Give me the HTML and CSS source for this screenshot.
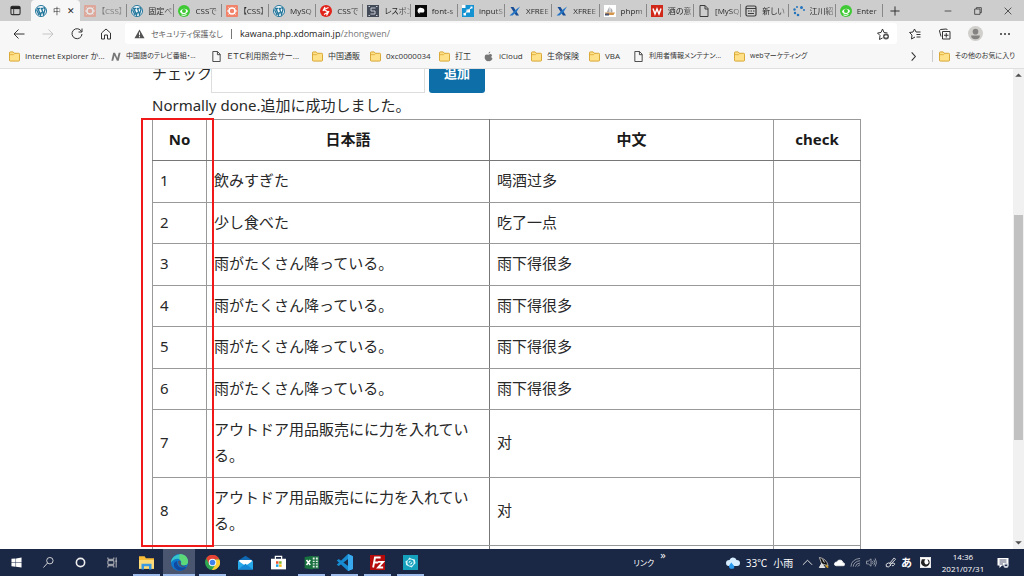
FILE: index.html
```html
<!DOCTYPE html>
<html lang="ja">
<head>
<meta charset="utf-8">
<title>中文</title>
<link rel="stylesheet" href="styles.css">
</head>
<body>
<svg class="defs" aria-hidden="true">
  <symbol id="wp" viewBox="0 0 24 24"><circle cx="12" cy="12" r="11" fill="#fff" stroke="#21759b" stroke-width="2"/><path d="M4 7h6M6 7l5 13 2-6M11 7h6M13 7l4 12 3-10c0-2-2-3-2-5M3 9l5 11" fill="none" stroke="#21759b" stroke-width="2.6"/></symbol>
  <symbol id="orange" viewBox="0 0 24 24"><rect width="24" height="24" rx="2" fill="#f0836a"/><circle cx="12" cy="12" r="6" fill="none" stroke="#fff" stroke-width="3"/><path d="M2 12h4M18 12h4M5 5l3 3M19 5l-3 3M5 19l3-3M19 19l-3-3" stroke="#fff" stroke-width="2"/></symbol>
  <symbol id="green" viewBox="0 0 24 24"><circle cx="12" cy="12" r="12" fill="#3fca35"/><path d="M4 13c3-7 13-7 16-1-2 7-13 9-16 1z" fill="#fff"/><circle cx="12" cy="12" r="4" fill="#3fca35"/><path d="M7 20q5 2 10-1" stroke="#fff" stroke-width="2" fill="none"/></symbol>
  <symbol id="red" viewBox="0 0 24 24"><circle cx="12" cy="12" r="12" fill="#e2231a"/><path d="M17 5 8 9l8 5-8 5M6 12l4-8M18 12l-5 9" fill="none" stroke="#fff" stroke-width="2.6"/></symbol>
  <symbol id="slate" viewBox="0 0 24 24"><rect width="24" height="24" fill="#434a58"/><path d="M17 6H8v6h8v6H7M3 3h3M18 3h3M3 21h3M18 21h3" fill="none" stroke="#c5cad3" stroke-width="2"/></symbol>
  <symbol id="black" viewBox="0 0 24 24"><rect width="24" height="24" fill="#080808"/><path d="M5 12c0-5 4-8 8-6 5-1 8 6 4 9H9v3l-3-3z" fill="#fff"/></symbol>
  <symbol id="blue" viewBox="0 0 24 24"><rect width="24" height="24" fill="#1492d2"/><path d="M0 0h7v6H0zM9 9h7v6H9zM17 3h4v4h-4zM3 16h5v5H3z" fill="#fff"/><path d="m5 18 7-7 7-6" stroke="#fff" stroke-width="2"/></symbol>
  <symbol id="xfree" viewBox="0 0 24 24"><path d="M3 4h6l11 17h-6z" fill="#174c96"/><path d="m22 3-8 6-4 4-9 8h6l8-7z" fill="#2475c5"/></symbol>
  <symbol id="pma" viewBox="0 0 24 24"><rect width="24" height="24" fill="#fff"/><path d="M11 3v12H5zM13 5q5 4 4 10h-4z" fill="#a9a9ad"/><path d="M1 15h21l-3 5H6z" fill="#d49449"/><path d="M2 17h8v4H2z" fill="#465170"/></symbol>
  <symbol id="weblio" viewBox="0 0 24 24"><rect width="24" height="24" fill="#d02719"/><path d="m4 7 4 11 4-10 4 10 4-11" fill="none" stroke="#fff" stroke-width="3"/></symbol>
  <symbol id="page" viewBox="0 0 24 24"><path d="M4 1h10l6 6v16H4zM14 1v7h6" fill="none" stroke="#3c3c3c" stroke-width="2"/></symbol>
  <symbol id="newtab" viewBox="0 0 24 24"><rect x="2" y="2" width="20" height="20" rx="3" fill="none" stroke="#3c3c3c" stroke-width="2.4"/><path d="M2 7h20M6 12h3M11 12h3M16 12h3M6 17h12" stroke="#3c3c3c" stroke-width="2"/></symbol>
  <symbol id="dots" viewBox="0 0 24 24"><g fill="#2475bd"><circle cx="3" cy="9" r="2.4"/><circle cx="8" cy="4" r="2"/><circle cx="4" cy="16" r="2.4"/><circle cx="10" cy="20" r="2.6"/><circle cx="17" cy="5" r="3"/><circle cx="22" cy="10" r="2"/></g></symbol>
  <symbol id="folder" viewBox="0 0 24 24"><path d="M1 4q0-2 2-2h6l3 3h9q2 0 2 2v13q0 2-2 2H3q-2 0-2-2z" fill="#ffe18a" stroke="#d5a128" stroke-width="2"/><path d="M1 8h9l3-3" stroke="#d5a128" stroke-width="1.5" fill="none"/></symbol>
</svg>

<header>
  <div class="tabbar">
    <button class="tabmenu" aria-label="タブ操作メニュー"><svg viewBox="0 0 24 24"><rect x="2" y="3" width="20" height="18" rx="3" fill="none" stroke="#333" stroke-width="2.4"/><path d="M2 4h20v5H2z" fill="#222"/><path d="M8 9v12" stroke="#333" stroke-width="2"/></svg></button>
    <nav class="tabs">
      <button class="tab active"><svg><use href="#wp"/></svg><span>中</span><i>✕</i></button>
      <button class="tab dim"><svg><use href="#orange"/></svg><span>【CSS】</span></button>
      <button class="tab"><svg><use href="#wp"/></svg><span>固定ペ</span></button>
      <button class="tab"><svg><use href="#green"/></svg><span>CSSで</span></button>
      <button class="tab"><svg><use href="#orange"/></svg><span>【CSS】</span></button>
      <button class="tab"><svg><use href="#wp"/></svg><span>MySQ</span></button>
      <button class="tab"><svg><use href="#red"/></svg><span>CSSで</span></button>
      <button class="tab"><svg><use href="#slate"/></svg><span>レスポン</span></button>
      <button class="tab"><svg><use href="#black"/></svg><span>font-s</span></button>
      <button class="tab"><svg><use href="#blue"/></svg><span>inputS</span></button>
      <button class="tab"><svg><use href="#xfree"/></svg><span>XFREE</span></button>
      <button class="tab"><svg><use href="#xfree"/></svg><span>XFREE</span></button>
      <button class="tab"><svg><use href="#pma"/></svg><span>phpm</span></button>
      <button class="tab"><svg><use href="#weblio"/></svg><span>酒の意</span></button>
      <button class="tab"><svg><use href="#page"/></svg><span>[MySQ</span></button>
      <button class="tab"><svg><use href="#newtab"/></svg><span>新しい</span></button>
      <button class="tab"><svg><use href="#dots"/></svg><span>江川紹</span></button>
      <button class="tab"><svg><use href="#green"/></svg><span>Enter</span></button>
    </nav>
    <div class="winctl">
      <button class="plus" aria-label="新しいタブ"><svg viewBox="0 0 24 24"><path d="M12 1v22M1 12h22"/></svg></button>
      <button aria-label="最小化"><svg viewBox="0 0 24 24"><path d="M2 12h20"/></svg></button>
      <button aria-label="元に戻す"><svg viewBox="0 0 24 24"><path d="M2 6h16v16H2zM7 6V2h15v15h-4"/></svg></button>
      <button aria-label="閉じる"><svg viewBox="0 0 24 24"><path d="m2 2 20 20M22 2 2 22"/></svg></button>
    </div>
  </div>

  <div class="toolbar">
    <button aria-label="戻る"><svg viewBox="0 0 24 24"><path d="M23 12H2M11 3l-9 9 9 9"/></svg></button>
    <button class="off" aria-label="進む"><svg viewBox="0 0 24 24"><path d="M1 12h21M13 3l9 9-9 9"/></svg></button>
    <button aria-label="更新"><svg viewBox="0 0 24 24"><path d="M21 7a10 10 0 1 0 1 5M22 1v7h-7"/></svg></button>
    <button aria-label="ホーム"><svg viewBox="0 0 24 24"><path d="m3 10 9-8 9 8v12h-6v-8H9v8H3z"/></svg></button>
    <div class="address">
      <svg class="warn" viewBox="0 0 24 24"><path d="M12 1 24 22H0z" fill="#555"/><path d="M12 8v7M12 17v3" stroke="#fff" stroke-width="2.4"/></svg>
      <span class="insecure">セキュリティ保護なし</span><span class="bar"></span>
      <span class="url" role="textbox" aria-label="アドレス">kawana.php.xdomain.jp<span>/zhongwen/</span></span>
      <button aria-label="お気に入りに追加"><svg viewBox="0 0 24 24"><path d="M11 20l-6 3 1-8-5-5 7-1 3-7 3 7 7 1"/><circle cx="18" cy="17" r="6" fill="#555" stroke="none"/><path d="M18 14v6M15 17h6" stroke="#fff"/></svg></button>
    </div>
    <button aria-label="お気に入り"><svg viewBox="0 0 24 24"><path d="M12 18l-7 4 1-8-5-5 7-1 3-6 3 6h9M15 13h8M15 18h8"/></svg></button>
    <button aria-label="コレクション"><svg viewBox="0 0 24 24"><path d="M7 7h15v15H7zM4 17l-3-11q0-2 2-3l11-1q2 0 3 2M14.500 10v9M10 14.500h9"/></svg></button>
    <button aria-label="プロフィール"><svg class="avatar" viewBox="0 0 24 24"><circle cx="12" cy="12" r="12" fill="#d1cfcc" stroke="none"/><circle cx="12" cy="9" r="4.500" fill="#858381" stroke="none"/><path d="M5 15h14q0 6-7 6t-7-6z" fill="#858381" stroke="none"/></svg></button>
    <button aria-label="設定など"><svg viewBox="0 0 24 24"><g fill="#333" stroke="none"><circle cx="4" cy="12" r="2"/><circle cx="12" cy="12" r="2"/><circle cx="20" cy="12" r="2"/></g></svg></button>
  </div>

  <nav class="bookmarks">
    <a href="#" class="long"><svg><use href="#folder"/></svg>Internet Explorer か...</a>
    <a href="#" class="long kana"><svg viewBox="0 0 24 24"><path d="m3 21 4-17h4l5 11 3-11h4l-4 17h-4l-5-11-3 11z" fill="#777"/></svg>中国語のテレビ番組・...</a>
    <a href="#" class="long"><svg><use href="#page"/></svg>ＥＴＣ利用照会サー...</a>
    <a href="#" class="mid"><svg><use href="#folder"/></svg>中国通販</a>
    <a href="#" class="wide"><svg><use href="#folder"/></svg>0xc0000034</a>
    <a href="#" class="short"><svg><use href="#folder"/></svg>打工</a>
    <a href="#" class="apple"><svg viewBox="0 0 24 24"><path d="M16 1q0 4-4 5 0-4 4-5zM12 8q5-3 8 1-4 4 1 8-4 7-9 5-5 2-8-5-2-12 8-9z" fill="#777"/></svg>iCloud</a>
    <a href="#" class="mid"><svg><use href="#folder"/></svg>生命保険</a>
    <a href="#" class="short"><svg><use href="#folder"/></svg>VBA</a>
    <a href="#" class="long kana"><svg><use href="#page"/></svg>利用者情報メンテナン...</a>
    <a href="#" class="long kana"><svg><use href="#folder"/></svg>webマーケティング</a>
    <button class="more" aria-label="その他"><svg viewBox="0 0 24 24"><path d="m8 3 8 9-8 9" fill="none" stroke="#333" stroke-width="2.4"/></svg></button>
    <a href="#" class="others kana"><svg><use href="#folder"/></svg>その他のお気に入り</a>
  </nav>
</header>

<div class="viewport">
  <main>
    <div class="content">
      <form class="entry">
        <label for="chk">チェック</label><input id="chk" type="text"><button type="button">追加</button>
      </form>
      <p>Normally done.追加に成功しました。</p>
      <div class="tablewrap">
        <table>
          <colgroup><col class="c-no"><col class="c-ja"><col class="c-zh"><col class="c-check"></colgroup>
          <thead><tr><th>No</th><th>日本語</th><th>中文</th><th>check</th></tr></thead>
          <tbody>
            <tr><td>1</td><td>飲みすぎた</td><td lang="zh">喝酒过多</td><td></td></tr>
            <tr><td>2</td><td>少し食べた</td><td lang="zh">吃了一点</td><td></td></tr>
            <tr><td>3</td><td>雨がたくさん降っている。</td><td lang="zh">雨下得很多</td><td></td></tr>
            <tr><td>4</td><td>雨がたくさん降っている。</td><td lang="zh">雨下得很多</td><td></td></tr>
            <tr><td>5</td><td>雨がたくさん降っている。</td><td lang="zh">雨下得很多</td><td></td></tr>
            <tr><td>6</td><td>雨がたくさん降っている。</td><td lang="zh">雨下得很多</td><td></td></tr>
            <tr><td>7</td><td>アウトドア用品販売にに力を入れている。</td><td lang="zh">对</td><td></td></tr>
            <tr><td>8</td><td>アウトドア用品販売にに力を入れている。</td><td lang="zh">对</td><td></td></tr>
            <tr><td>&nbsp;</td><td></td><td></td><td></td></tr>
          </tbody>
        </table>
        <div class="marker"></div>
      </div>
    </div>
  </main>
  <div class="scrollbar">
    <svg viewBox="0 0 10 10"><path d="m2 7 3-3 3 3z" fill="#505050"/></svg>
    <span class="before"></span><span class="thumb"></span><span class="after"></span>
    <svg viewBox="0 0 10 10"><path d="m2 3 3 3 3-3z" fill="#505050"/></svg>
  </div>
</div>

<footer class="taskbar">
  <div class="system">
    <button aria-label="スタート"><svg viewBox="0 0 24 24"><path d="m1 4 9-1v8H1zM11 3l12-2v10H11zM1 12h9v9l-9-1zM11 12h12v11l-12-2z" fill="#fff"/></svg></button>
    <button aria-label="検索"><svg viewBox="0 0 24 24"><g fill="none" stroke="#ddd" stroke-width="2"><circle cx="15" cy="8" r="7"/><path d="M10 13 1 23"/></g></svg></button>
    <button aria-label="Cortana"><svg viewBox="0 0 24 24"><circle cx="12" cy="12" r="9" fill="none" stroke="#eee" stroke-width="3.500"/></svg></button>
    <button aria-label="タスク ビュー"><svg viewBox="0 0 24 24"><path d="M2 1v4h13V1M2 23v-4h13v4M2 8h13v8H2zM20 1v22M18 9h4" fill="none" stroke="#ccc" stroke-width="2"/></svg></button>
  </div>
  <div class="apps">
    <button class="run" aria-label="エクスプローラー"><svg viewBox="0 0 24 24"><path d="M0 2h9l2 3h13v17H0z" fill="#f8bd38"/><path d="M0 8h24v14H0z" fill="#ffdc79"/><path d="M4 23v-9h16v9h-4v-5H8v5z" fill="#3d9ae0"/></svg></button>
    <button class="run current" aria-label="Edge"><svg class="big" viewBox="0 0 24 24"><circle cx="12" cy="12" r="12" fill="#0c78ce"/><path d="M0 12C1-3 24-3 24 11c0 6-8 6-10 3 3-7-7-11-14-2z" fill="#37c5ca"/><path d="M12 0c9 0 12 6 12 11 0 6-8 6-10 3 2-3 0-5-2-6z" fill="#5cd879"/><path d="M9 10c-2 7 5 11 13 8-6 10-18 4-18-3q0-4 5-5z" fill="#12499e"/><path d="M10 10c5-2 4 3 4 5 3 2 6 2 8 1-4 5-13 2-12-6z" fill="#4a566f"/></svg></button>
    <button class="run" aria-label="Chrome"><svg viewBox="0 0 24 24"><circle cx="12" cy="12" r="12" fill="#2ea650"/><path d="M2 5a12 12 0 0 1 21 2H12l-5 8z" fill="#e34234"/><path d="M23 7a12 12 0 0 1-12 17l6-9V7z" fill="#fccc32"/><circle cx="12" cy="12" r="6" fill="#fff"/><circle cx="12" cy="12" r="4.500" fill="#3d82ed"/></svg></button>
    <button aria-label="メール"><svg viewBox="0 0 24 24"><path d="M0 9 12 1l12 8v13H0z" fill="#1068b3"/><path d="M2 8h20v8H2z" fill="#fff"/><path d="m0 9 12 8L24 9v14H0z" fill="#27a8e8"/><path d="m0 23 12-9 12 9z" fill="#1689d6"/></svg></button>
    <button aria-label="Microsoft Store"><svg viewBox="0 0 24 24"><path d="M7 7V2h10v5" fill="none" stroke="#fff" stroke-width="2"/><path d="M0 6h24v17H0z" fill="#fff"/><path d="M8 10h4v4H8z" fill="#ee5126"/><path d="M13 10h4v4h-4z" fill="#7cb72b"/><path d="M8 15h4v4H8z" fill="#1ca4e6"/><path d="M13 15h4v4h-4z" fill="#f9b915"/></svg></button>
    <button class="run" aria-label="Excel"><svg viewBox="0 0 24 24"><path d="M12 3h11v18H12z" fill="#e7f3eb" stroke="#1e7145" stroke-width="2"/><path d="M13 8h9M13 12h9M13 16h9M18 3v18" stroke="#1e7145" stroke-width="2"/><path d="m1 3 13-2v22L1 21z" fill="#17723f"/><path d="m4 8 6 8M10 8l-6 8" stroke="#fff" stroke-width="2.400"/></svg></button>
    <button class="run" aria-label="Visual Studio Code"><svg class="big" viewBox="0 0 24 24"><path d="m17 0 7 3v18l-7 3L1 9l3-2 13 10V7L4 17l-3-2z" fill="#168bd2"/><path d="m17 0 7 3v18l-7 3z" fill="#38a9ee"/></svg></button>
    <button class="run" aria-label="FileZilla"><svg viewBox="0 0 24 24"><rect width="24" height="24" fill="#b50b0b"/><path d="M5 20 8 4h9M6 12h7M13 11h8l-8 9h8" fill="none" stroke="#fff" stroke-width="3"/></svg></button>
    <button class="run" aria-label="アプリ"><svg viewBox="0 0 24 24"><rect width="24" height="24" fill="#15a0bb"/><path d="m10 4 4 2 5 1 1 6-3 3-3 4-5-2-4-2-1-6 4-2z" fill="#d8f6fa"/><circle cx="12" cy="12" r="4" fill="none" stroke="#15a0bb" stroke-width="2"/><path d="m10 14 4-4" stroke="#15a0bb" stroke-width="2"/></svg></button>
  </div>
  <div class="links">リンク<sup>»</sup></div>
  <div class="weather"><svg viewBox="0 0 24 24"><path d="M5 17q-5 0-5-5t6-5q2-6 8-4 3 1 4 4 6 0 6 5t-5 5z" fill="#d5edff"/><path d="m9 11-4 6q0 5 5 5t4-5z" fill="#2a9aef"/></svg><span>33℃</span><span>小雨</span></div>
  <div class="tray">
    <svg viewBox="0 0 24 24"><path d="m2 17 10-10 10 10"/></svg>
    <svg viewBox="0 0 24 24"><path d="M3 1q16 3 19 18L8 15z" fill="#111" stroke="#bbb"/><path d="M8 14 3 23h12zM14 12l-4-7" fill="#ddd"/><path d="m17 18 5 5" stroke="#cc9b29" stroke-width="4"/></svg>
    <svg viewBox="0 0 24 24"><path d="M4 19q-4-1-3-5 1-3 5-3 3-6 9-4 4 1 4 5 5 1 4 5 0 2-3 2z" fill="#fff"/></svg>
    <svg class="faint" viewBox="0 0 24 24"><path d="M2 21Q3 5 22 3M7 21Q8 10 22 8M12 21q1-7 10-8M17 21q1-3 5-4"/></svg>
    <svg class="faint" viewBox="0 0 24 24"><path d="M1 9h4l6-5v16l-6-5H1zM14 9q3 3 0 6M17 6q5 6 0 12M20 3q6 9 0 18"/></svg>
    <svg class="pen" viewBox="0 0 24 24"><path d="M10 14 20 2l3 3-11 11zM13 17q-5 7-10 4-3-6 4-8 7 0 5 6M14 14q8-2 7 2-2 4-6 3"/></svg>
    <b>あ</b>
    <svg class="ime" viewBox="0 0 24 24"><rect x="1" y="1" width="22" height="22" fill="#fff"/><path d="M4 5h8q-5 6 0 11 5 1 7-4l-3-7q6 2 5 9-3 7-10 7-8-2-9-9z" fill="#222" stroke="none"/></svg>
  </div>
  <div class="clock"><time>14:36</time><time>2021/07/31</time></div>
  <button class="notice" aria-label="通知"><svg viewBox="0 0 24 24"><path d="M1 2h22v15H10l-5 5v-5H1z" fill="#fff"/><path d="M5 6h14M5 10h14M5 14h7" stroke="#1a2745" stroke-width="1.500"/><circle cx="18" cy="17" r="5" fill="#ccd1da"/><path d="m15 18 3-4 3 4z" fill="#1a2745"/></svg></button>
</footer>
</body>
</html>
```
FILE: styles.css
```css
* { box-sizing: border-box; }

html, body { height: 100%; }

body {
  margin: 0;
  display: flex;
  flex-direction: column;
  overflow: hidden;
  background: #fff;
  color: #282828;
  font-family: "Noto Sans", "Noto Sans CJK JP", sans-serif;
}

button {
  margin: 0;
  padding: 0;
  border: 0;
  background: none;
  color: inherit;
  font: inherit;
}

svg { display: block; flex: none; }
.defs { position: absolute; width: 0; height: 0; }

header {
  flex: none;
  background: #f7f7f7;
  border-bottom: 1px solid #dfdfdf;
  font: 9px/12px "Open Sans", "Noto Sans CJK JP", sans-serif;
  font-feature-settings: "palt";
}

/* tab strip */
.tabbar { display: flex; height: 21px; background: #cdcdcd; }
.tabmenu { width: 31px; display: grid; place-items: center; }
.tabmenu svg { width: 11px; height: 11px; }
.tabs { flex: 1; min-width: 0; display: flex; }
.tab {
  flex: 1 1 0;
  min-width: 0;
  display: flex;
  align-items: center;
  gap: 5px;
  padding: 0 1px 0 4px;
  position: relative;
  text-align: left;
  font-size: 8px;
}
.tab svg { width: 12px; height: 12px; }
.tab span {
  flex: 1;
  min-width: 0;
  white-space: nowrap;
  -webkit-mask-image: linear-gradient(90deg, #000 60%, rgba(0, 0, 0, .3));
  mask-image: linear-gradient(90deg, #000 60%, rgba(0, 0, 0, .3));
}
.tab:not(.active)::after { content: ""; position: absolute; right: 0; top: 4px; bottom: 4px; width: 1px; background: #888; }
.tab.dim svg, .tab.dim span { opacity: .5; }
.tab.active { flex: 0 0 49px; gap: 6px; background: #f7f7f7; border-radius: 4px 4px 0 0; }
.tab.active span { flex: none; }
.tab.active i { font: 9px/12px "DejaVu Sans", sans-serif; }
.winctl { flex: none; width: 141px; display: flex; align-items: center; gap: 20px; padding-right: 11px; }
.winctl button { flex: none; width: 10px; display: grid; place-items: center; }
.winctl .plus { width: 24px; margin-right: auto; }
.winctl svg { width: 8px; height: 8px; fill: none; stroke: #333; stroke-width: 2.4; }
.winctl .plus svg { width: 10px; height: 10px; }

/* navigation bar */
.toolbar { display: flex; align-items: center; height: 25px; padding: 0 4px; }
.toolbar button { flex: none; width: 29px; height: 20px; display: grid; place-items: center; }
.toolbar .address ~ button { width: 30px; }
.toolbar svg { width: 12px; height: 12px; fill: none; stroke: #333; stroke-width: 2; }
.toolbar .off { opacity: .25; }
.toolbar .avatar { width: 15px; height: 15px; }
.address { flex: 1; min-width: 0; height: 21px; margin: 0 3px 0 5px; display: flex; align-items: center; background: #fff; border-radius: 3px; padding-left: 9px; }
.address .warn { width: 11px; height: 10px; stroke: none; }
.insecure { margin-left: 6px; color: #666; font-size: 8px; white-space: nowrap; }
.bar { width: 1px; height: 10px; margin: 0 8px; background: #777; }
.url { flex: 1; color: #222; white-space: nowrap; }
.url span { color: #777; }

/* favourites */
.bookmarks { display: flex; align-items: center; height: 22px; padding: 0 9px 2px; font-size: 8px; white-space: nowrap; }
.bookmarks a { flex: none; display: flex; align-items: center; gap: 5px; color: #333; text-decoration: none; }
.bookmarks .kana { font-size: 7px; }
.bookmarks svg { width: 11px; height: 11px; }
.long { width: 101px; }
.mid { width: 58px; }
.wide { width: 69px; }
.short { width: 44px; }
.apple { width: 48px; }
.more { margin-left: auto; padding-right: 13px; }
.bookmarks .others { border-left: 1px solid #ccc; padding-left: 6px; }

/* page */
.viewport { flex: 1; min-height: 0; display: flex; }
main { flex: 1; min-width: 0; overflow: hidden; font-size: 15px; line-height: 26px; }
.content { max-width: 709px; margin: -16px auto 0; }
.entry { display: flex; align-items: center; }
.entry label { flex: none; width: 59px; white-space: nowrap; }
.entry input { width: 214px; height: 40px; border: 1px solid #ddd; background: #fff; font: inherit; }
.entry button { width: 56px; height: 40px; margin-left: 4px; border-radius: 3px; background: #0e6fa8; color: #fff; font-size: 13px; font-weight: bold; }
.content p { margin: 0; padding-bottom: 2px; line-height: 24px; }
.tablewrap { position: relative; }
table { width: 100%; table-layout: fixed; border-collapse: collapse; }
.c-no { width: 54px; }
.c-ja { width: 283px; }
.c-zh { width: 284px; }
th, td { border: 1px solid #999; padding: 6px 8px 8px; text-align: left; }
th { text-align: center; color: #1a1a1a; border-bottom-color: #777; }
td { padding-left: 7px; }
th:nth-child(2), td:nth-child(2) { border-right-color: #777; }
td:lang(zh) { font-family: "Noto Sans", "Noto Sans CJK SC", sans-serif; }
tbody tr:nth-child(odd) td, tbody tr:nth-child(8) td { padding-bottom: 9px; }
.marker { position: absolute; left: -11px; top: -1px; width: 73px; height: 429px; border: 2px solid #f01818; pointer-events: none; }

.scrollbar { flex: none; width: 11px; display: flex; flex-direction: column; background: #f1f1f1; }
.scrollbar svg { width: 11px; height: 11px; }
.before { flex: 135; }
.thumb { flex: 225; margin: 0 1px; background: #c1c1c1; }
.after { flex: 98; }

/* taskbar */
.taskbar { flex: none; height: 27px; display: flex; align-items: stretch; background: #1a2745; color: #fff; font: 9px/12px "Open Sans", "Noto Sans CJK JP", sans-serif; font-feature-settings: "palt"; }
.system, .apps { display: flex; }
.taskbar button { display: grid; place-items: center; }
.system button { width: 32px; }
.system svg { width: 11px; height: 11px; }
.apps { gap: 1px; padding-left: 2px; }
.apps button { width: 32px; border-bottom: 2px solid transparent; padding-top: 2px; }
.apps svg { width: 15px; height: 15px; }
.apps .big { width: 17px; height: 17px; }
.apps .run { background: linear-gradient(#9dbbeb, #9dbbeb) bottom / 27px 2px no-repeat border-box; }
.apps .current { background: linear-gradient(#9dbbeb, #9dbbeb) bottom / 32px 2px no-repeat border-box #4a566f; }
.links { display: flex; align-items: center; gap: 6px; margin-left: auto; font-size: 8px; }
.links sup { align-self: flex-start; font-size: 11px; line-height: 12px; }
.weather { display: flex; align-items: center; gap: 6px; margin-left: 60px; font-size: 10px; }
.weather svg { width: 14px; height: 14px; }
.tray { display: flex; align-items: center; gap: 5px; margin-left: 9px; }
.tray svg { width: 11px; height: 11px; fill: none; stroke: #eee; stroke-width: 2; }
.tray .faint { opacity: .6; }
.tray .pen { margin-left: 3px; }
.tray b { font-size: 11px; }
.tray .ime { margin-left: 3px; }
.clock { width: 62px; padding-left: 2px; display: flex; flex-direction: column; justify-content: center; text-align: center; font-size: 8px; }
.notice { width: 20px; margin-right: 11px; }
.notice svg { width: 12px; height: 12px; }
```
